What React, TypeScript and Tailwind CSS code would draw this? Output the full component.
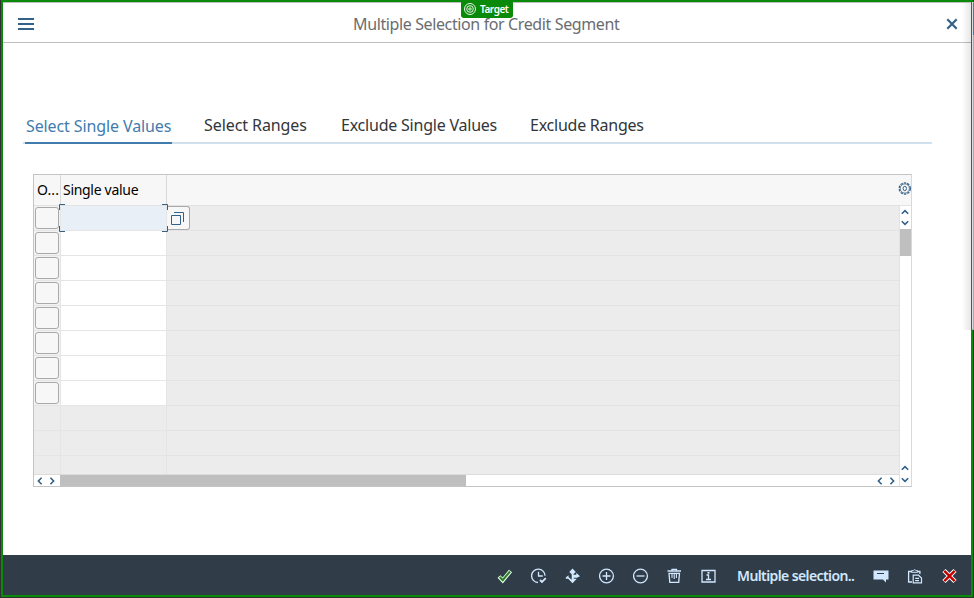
import React from "react";

const sans = "font-['Noto_Sans','Open_Sans',sans-serif]";

function Chevron({ dir }: { dir: "up" | "down" | "left" | "right" }) {
  const d = {
    up: "M.8 5.8 4 2.6 7.2 5.8",
    down: "M.8 2.2 4 5.4 7.2 2.2",
    left: "M5.6 .8 2.4 4 5.6 7.2",
    right: "M2.4 .8 5.6 4 2.4 7.2",
  }[dir];
  return (
    <svg className="size-2 shrink-0" viewBox="0 0 8 8" fill="none" stroke="#346187" strokeWidth="1.6">
      <path d={d} />
    </svg>
  );
}

function Fit({ text, width, className }: { text: string; width: string; className: string }) {
  return <span className={`block whitespace-nowrap ${width} ${className}`}>{text}</span>;
}

function ToolIcon({ children }: { children: React.ReactNode }) {
  return (
    <svg className="size-4 shrink-0" viewBox="0 0 16 16" fill="none" stroke="#d1e8ff" strokeWidth="1.3">
      {children}
    </svg>
  );
}

function Header() {
  return (
    <header className="flex h-[41px] shrink-0 items-center border-t border-b border-[#bfbfbf] bg-white pt-[2px] pr-[13px] pl-[15px]">
      <svg className="h-3 w-4 shrink-0" viewBox="0 0 16 12" fill="#346187">
        <path d="M0 0h16v2H0zM0 5h16v2H0zM0 10h16v2H0z" />
      </svg>
      <div className="flex flex-1 justify-center pr-2">
        <Fit text="Multiple Selection for Credit Segment" width="w-[266px]" className="text-base leading-5 tracking-[-0.38px] text-[#6a6d70]" />
      </div>
      <svg className="size-3 shrink-0" viewBox="0 0 12 12" stroke="#346187" strokeWidth="2.2">
        <path d="m1.3 1.3 9.4 9.4M10.7 1.3l-9.4 9.4" />
      </svg>
    </header>
  );
}

function Tabs() {
  return (
    <nav className="mt-[72px] mr-[39px] ml-5 flex h-[29px] items-end border-b-2 border-[#d1e0ee] pl-0.5 text-base leading-5 text-[#32363a]">
      <div className="-mb-0.5 h-[28px] w-[147px] border-b-2 border-[#427cac] pl-px text-[#427cac]">
        <Fit text="Select Single Values" width="w-[145px]" className="tracking-[-0.11px]" />
      </div>
      <div className="ml-8 flex h-[28px] gap-[33px] pt-px">
        <Fit text="Select Ranges" width="w-[104px]" className="tracking-[-0.08px]" />
        <Fit text="Exclude Single Values" width="w-[156px]" className="tracking-[-0.22px]" />
        <Fit text="Exclude Ranges" width="w-[115px]" className="tracking-[-0.24px]" />
      </div>
    </nav>
  );
}

function Row({ index }: { index: number }) {
  const active = index === 0;
  const filled = index < 8;
  return (
    <div className="flex h-[25px] shrink-0">
      <div className={`flex w-[27px] items-center border-r border-b border-[#e5e5e5] pl-px ${filled ? "bg-[#f2f2f2]" : "bg-[#ececec]"}`}>
        {filled && <span className="h-[22px] w-6 rounded-[3px] border border-[#a9a9a9] bg-[#f7f7f7]" />}
      </div>
      <div className={`relative w-[106px] border-r border-b border-[#e5e5e5] ${active ? "bg-[#e8eff6]" : filled ? "bg-white" : "bg-[#ececec]"}`}>
        {active && (
          <svg className="absolute -top-[2px] -left-[2px] z-10 h-[28px] w-[109px] max-w-none" viewBox="0 0 109 28" fill="none" stroke="#346187">
            <path d="M6 .5H.5V6M103 .5h5.5V6M.5 22v5.5H6M103 27.5h5.5V22" />
          </svg>
        )}
      </div>
      <div className="flex flex-1 border-b border-[#e3e3e3] bg-[#ececec]">
        {active && (
          <button className="flex h-6 w-[23px] items-center justify-center rounded-r-[3px] border border-l-0 border-[#a9a9a9] bg-[#f7f7f7] pr-[2px]">
            <svg className="size-[13px]" viewBox="0 0 13 13" fill="none" stroke="#346187">
              <path d="M.5 3.5h9v9h-9zM3 .5h9.5V10" />
            </svg>
          </button>
        )}
      </div>
    </div>
  );
}

function Table() {
  return (
    <section className="mt-[30px] ml-[30px] flex h-[313px] w-[879px] flex-col border border-[#c4c4c4] border-r-[#d9d9d9] text-sm text-black">
      <div className="flex h-[31px] shrink-0 items-center border-b border-[#e2e2e2] bg-[#f7f7f7]">
        <div className="flex h-full w-[27px] items-center border-r border-[#d9d9d9] pl-[3px] tracking-[0.1px]">O...</div>
        <div className="flex h-full w-[106px] items-center border-r border-[#d9d9d9] pl-[2px]">
          <Fit text="Single value" width="w-[75px]" className="tracking-[-0.3px]" />
        </div>
        <div className="flex flex-1 justify-end pb-[3px]">
          <svg className="size-[13px]" viewBox="0 0 13 13" fill="none" stroke="#346187">
            <circle cx="6.8" cy="6.5" r="5.6" strokeWidth="1.2" strokeDasharray="2.5 1.02" />
            <circle cx="6.8" cy="6.5" r="4.6" strokeWidth=".8" />
            <ellipse cx="6.8" cy="6.5" rx="1.7" ry="2.2" />
          </svg>
        </div>
      </div>
      <div className="flex min-h-0 flex-1">
        <div className="flex w-[865px] flex-col">
          <div className="-mt-[2px] flex h-[270px] shrink-0 flex-col overflow-hidden pt-[2px]">
            {Array.from({ length: 11 }, (_, i) => <Row key={i} index={i} />)}
          </div>
          <div className="flex h-3 items-center border-t border-[#dcdcdc] bg-white">
            <div className="flex w-[26px] gap-1 pt-px pl-0.5"><Chevron dir="left" /><Chevron dir="right" /></div>
            <div className="h-[11px] w-[406px] bg-[#bfbfbf]" />
            <div className="ml-auto flex gap-1 pt-px pr-[3px]"><Chevron dir="left" /><Chevron dir="right" /></div>
          </div>
        </div>
        <div className="flex flex-1 flex-col items-center border-l border-[#e2e2e2] bg-white pt-[2px] pr-px pb-0.5">
          <Chevron dir="up" />
          <div className="h-[3px]" />
          <Chevron dir="down" />
          <div className="mt-0.5 -mr-px h-[27px] w-[11px] shrink-0 bg-[#bfbfbf]" />
          <div className="flex-1" />
          <Chevron dir="up" />
          <div className="h-1" />
          <Chevron dir="down" />
        </div>
      </div>
    </section>
  );
}

function Footer() {
  return (
    <footer className="mt-auto flex h-10 shrink-0 items-center bg-[#303c48] pt-px pl-[494px]">
      <div className="flex gap-[18px]">
        <ToolIcon>
          <path d="m2 8.5 3.7 4L13.5 3" stroke="#e9ffe9" strokeWidth="4" />
          <path d="m2.7 9 3 3.2L13 3.5" stroke="#2b7d2b" strokeWidth="2" />
        </ToolIcon>
        <ToolIcon>
          <path d="M7 14.5A6.7 6.7 0 1 1 14 7.8M7.5 3.8V8h4.3" />
          <path d="m9 12 2 2 3.8-3.8" strokeWidth="1.8" />
        </ToolIcon>
        <ToolIcon>
          <path d="M7.5 .5 4.3 4l2.4 2.2v5.6L3.5 9V7.3L.8 9.5v1.2h2.4l4.3 4.6 4.3-4.6h-3v-1h3L15 8.2 11.3 4.8v2H8.4V6.2L10.8 4z" fill="#d1e8ff" stroke="none" />
        </ToolIcon>
        <ToolIcon><circle cx="7.5" cy="8" r="6.9" /><path d="M7.5 4v8M3.5 8h8" /></ToolIcon>
        <ToolIcon><circle cx="7.5" cy="8" r="6.9" /><path d="M3.5 8h8" /></ToolIcon>
        <ToolIcon>
          <path d="M.5 3h13.5M5 2.4V1.3h4.5v1.1M2 5.3h10.5l-.8 9H2.8z" />
          <path d="M5 6v4M7.2 6v5M9.4 6v4" strokeWidth="1.1" />
        </ToolIcon>
        <ToolIcon>
          <path d="M1 2.5h13v11.5H1zM5.5 7h2v4.5M5 11.5h5" />
          <path d="M6.5 4h2v1.7h-2z" fill="#d1e8ff" stroke="none" />
        </ToolIcon>
      </div>
      <Fit text="Multiple selection.." width="w-[117px]" className="ml-[20px] text-sm font-semibold tracking-[-0.6px] text-[#d1e8ff]" />
      <div className="ml-[19px] flex gap-[18px]">
        <ToolIcon>
          <path d="M.5 2.5h15v9H13v3l-3-3H.5z" fill="#d1e8ff" stroke="none" />
          <path d="M4 5.5h7" stroke="#303c48" strokeWidth="1" />
        </ToolIcon>
        <ToolIcon>
          <path d="M5 14H1.6V3.5h2.9M10.5 3.5h2.4V6" />
          <path d="M4.5 4.3V2.7h1.7a1.5 1.5 0 0 1 2.8 0h1.6v1.6z" strokeWidth="1" />
          <path d="M6.2 7.2h5.3l3 2.8v4.8H6.2zM8.2 10.3h3.8M8.2 12.6h3.8" strokeWidth="1.2" />
        </ToolIcon>
        <ToolIcon>
          <path d="m3 2.5 11 11M14 2.5l-11 11" stroke="#fff" strokeWidth="4.5" />
          <path d="m3.3 2.8 10.4 10.4M13.7 2.8 3.3 13.2" stroke="#c00000" strokeWidth="2.4" />
        </ToolIcon>
      </div>
    </footer>
  );
}

export default function App() {
  return (
    <div className={`relative flex h-[598px] w-[974px] overflow-hidden bg-[#2f332f] pr-px pb-px pl-px ${sans}`}>
      <main className="flex w-[972px] flex-col border-2 border-[#0a8a0a] bg-white">
        <Header />
        <Tabs />
        <Table />
        <Footer />
      </main>
      <div className="absolute top-[3px] right-[3px] h-[327px] w-[9px] bg-linear-to-r from-transparent to-black/10" />
      <div className="absolute top-[2px] right-0 h-[328px] w-[2px] border-r border-b border-[#a9a9b0] bg-[#dcdcdc]" />
      <div className="absolute top-[3px] right-0 h-8 w-px bg-[#427cac]" />
      <div className="absolute top-0 left-[461px] flex h-[18px] w-[52px] items-center gap-1 rounded-b-[3px] bg-[#0a8a0a] pl-[3px] text-white">
        <svg className="size-3" viewBox="0 0 12 12" fill="none" stroke="white" strokeWidth=".9">
          <circle cx="6" cy="6" r="5.5" /><circle cx="6" cy="6" r="3.3" /><circle cx="6" cy="6" r="1.2" />
        </svg>
        <span className="text-[10px] leading-none font-semibold tracking-[-0.45px]">Target</span>
      </div>
    </div>
  );
}
